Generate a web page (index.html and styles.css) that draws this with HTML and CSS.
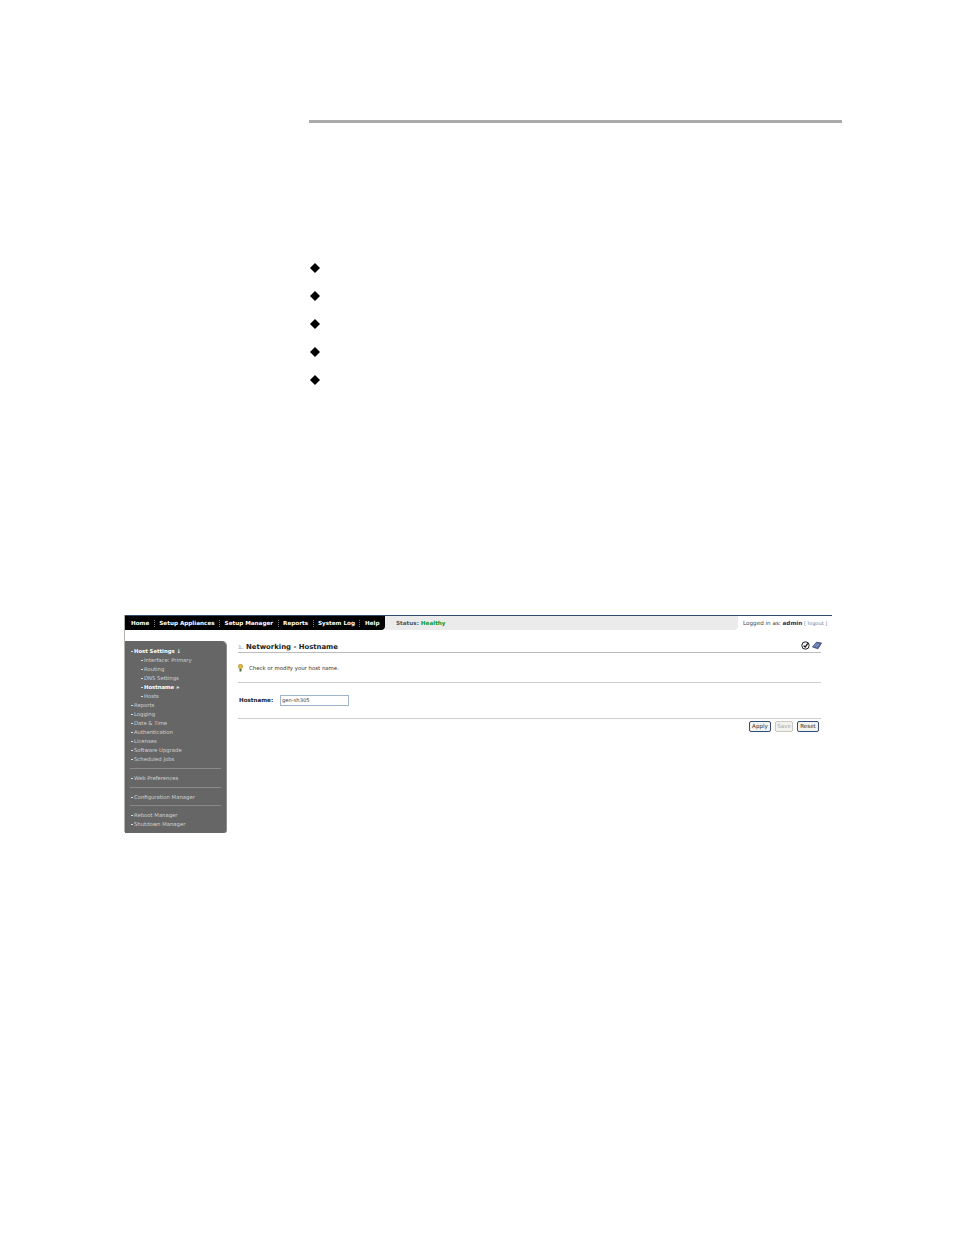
FILE: index.html
```html
<!DOCTYPE html>
<html lang="en">
<head>
  <meta charset="UTF-8">
  <title>Hostname</title>
  <link rel="stylesheet" href="styles.css">
</head>
<body>
  <div class="page-rule"></div>
  <ul class="bullets">
    <li><svg viewBox="0 0 10 10"><polygon points="5,0 10,5 5,10 0,5"/></svg></li>
    <li><svg viewBox="0 0 10 10"><polygon points="5,0 10,5 5,10 0,5"/></svg></li>
    <li><svg viewBox="0 0 10 10"><polygon points="5,0 10,5 5,10 0,5"/></svg></li>
    <li><svg viewBox="0 0 10 10"><polygon points="5,0 10,5 5,10 0,5"/></svg></li>
    <li><svg viewBox="0 0 10 10"><polygon points="5,0 10,5 5,10 0,5"/></svg></li>
  </ul>

  <div class="shot">
    <div class="topbar">
      <nav class="menu">
        <a>Home</a><i></i>
        <a>Setup Appliances</a><i></i>
        <a class="current">Setup Manager</a><i></i>
        <a>Reports</a><i></i>
        <a>System Log</a><i></i>
        <a>Help</a>
      </nav>
      <div class="status">Status: <b>Healthy</b></div>
      <div class="login">Logged in as: <b>admin</b> <span>[ logout ]</span></div>
    </div>

    <div class="columns">
      <aside class="sidebar">
        <ul class="side-group">
          <li class="head">Host Settings &#8595;</li>
          <li class="sub">Interface: Primary</li>
          <li class="sub">Routing</li>
          <li class="sub">DNS Settings</li>
          <li class="sub active">Hostname &raquo;</li>
          <li class="sub">Hosts</li>
          <li>Reports</li>
          <li>Logging</li>
          <li>Date &amp; Time</li>
          <li>Authentication</li>
          <li>Licenses</li>
          <li>Software Upgrade</li>
          <li>Scheduled Jobs</li>
        </ul>
        <ul class="side-group">
          <li>Web Preferences</li>
        </ul>
        <ul class="side-group tight">
          <li>Configuration Manager</li>
        </ul>
        <ul class="side-group">
          <li>Reboot Manager</li>
          <li>Shutdown Manager</li>
        </ul>
      </aside>

      <main class="content">
        <div class="title-row">
          <h1><span class="crumb">1.</span> Networking - Hostname</h1>
          <div class="title-icons">
            <svg width="9" height="9" viewBox="0 0 9 9"><circle cx="4.5" cy="4.5" r="3.7" fill="#f4f4f4" stroke="#222" stroke-width="1"/><path d="M2.6 4.6 4.2 6 6.8 2.4" fill="none" stroke="#111" stroke-width="1.2"/></svg>
            <svg width="10" height="9" viewBox="0 0 10 9"><path d="M0.5 6 4.5 1.2 9.5 2 6 7.8 Z" fill="#5a6ea8" stroke="#2c3563" stroke-width="0.7"/><path d="M2 5.6 5 2.4 M4 6 7 3" stroke="#c4cde8" stroke-width="0.6"/></svg>
          </div>
        </div>
        <div class="hint">
          <svg width="5" height="8" viewBox="0 0 5 8"><circle cx="2.5" cy="2.5" r="2.2" fill="#e2b93a" stroke="#8a7420" stroke-width="0.5"/><rect x="1.5" y="5" width="2" height="2.5" fill="#5c6a3a"/></svg>
          <span>Check or modify your host name.</span>
        </div>
        <div class="field">
          <label>Hostname:</label>
          <input class="text-input" type="text" value="gen-sh305">
        </div>
        <div class="actions">
          <button class="btn">Apply</button>
          <button class="btn disabled">Save</button>
          <button class="btn">Reset</button>
        </div>
      </main>
    </div>
  </div>
</body>
</html>
```

FILE: styles.css
```css
* {
  margin: 0;
  padding: 0;
  box-sizing: border-box;
}
body {
  background: #fff;
  font-family: "DejaVu Sans", Verdana, sans-serif;
  min-height: 1235px;
}
ul {
  list-style: none;
}

/* document page */
.page-rule {
  margin: 120px 112px 0 309px;
  height: 3px;
  background: #aaa;
}
.bullets {
  margin: 130.5px 0 0 310px;
}
.bullets li {
  height: 28px;
  display: flex;
  align-items: center;
}
.bullets svg {
  width: 10px;
  height: 10px;
}

/* screenshot inside the page */
.shot {
  margin: 221.5px 122px 0 124px;
  height: 217px;
  border-left: 1px solid #b5b1a6;
  display: flex;
  flex-direction: column;
}
.topbar {
  display: flex;
  height: 15px;
  border-top: 1px solid #2f4d6e;
  font-size: 5.65px;
  line-height: 14px;
}
.menu {
  display: flex;
  align-items: center;
  width: 260px;
  padding-left: 6px;
  background: #000;
  color: #fff;
  font-weight: bold;
  border-radius: 0 0 4px 0;
}
.menu i {
  height: 7px;
  border-left: 1px dotted #777;
  margin: 0 4.5px;
}
.status {
  width: 353px;
  padding-left: 11px;
  background: #ebebeb;
  color: #555;
  font-weight: bold;
  border-radius: 0 0 4px 0;
}
.status b {
  color: #0a9a2a;
}
.login {
  flex: 1;
  padding-left: 5px;
  color: #444;
  white-space: nowrap;
}
.login b {
  color: #12306e;
}
.login span {
  color: #5b7fb0;
  font-size: 5.1px;
}

.columns {
  display: flex;
  flex: 1;
  margin-top: 11px;
}

/* left menu */
.sidebar {
  width: 102px;
  padding: 5.5px 5px 0 5px;
  background: #666;
  border-right: 1px solid #8b8b8b;
  border-radius: 0 5px 3px 0;
  color: #d2d2d2;
  font-size: 5.3px;
  line-height: 9px;
}
.side-group {
  padding-bottom: 4px;
  margin-bottom: 5px;
  border-bottom: 1px solid #8a8a8a;
}
.side-group.tight {
  padding-bottom: 3px;
}
.side-group:last-child {
  border-bottom: none;
  margin-bottom: 0;
}
.side-group li {
  padding-left: 4px;
  position: relative;
  white-space: nowrap;
}
.side-group li::before {
  content: "";
  position: absolute;
  left: 1px;
  top: 4px;
  width: 1.5px;
  height: 1px;
  background: #ddd;
}
.side-group .head {
  color: #fff;
  font-weight: bold;
}
.side-group .sub {
  padding-left: 14px;
}
.side-group .sub::before {
  left: 11px;
}
.side-group .active {
  color: #fff;
  font-weight: bold;
}

/* main panel */
.content {
  width: 583px;
  margin-left: 11px;
  font-size: 5.4px;
  color: #333;
}
.title-row {
  display: flex;
  justify-content: space-between;
  height: 12px;
  border-bottom: 1px solid #bbb;
}
.title-row h1 {
  font-size: 6.9px;
  line-height: 13px;
  font-weight: bold;
  color: #222;
}
.crumb {
  color: #a8b4c4;
  font-size: 5.2px;
}
.title-icons {
  display: flex;
  gap: 2px;
  margin-right: -1px;
}
.hint {
  display: flex;
  align-items: center;
  gap: 6px;
  height: 30px;
  border-bottom: 1px solid #ccc;
}
.field {
  display: flex;
  align-items: center;
  height: 36px;
  padding-bottom: 1px;
  border-bottom: 1px solid #ccc;
}
.field label {
  width: 42px;
  padding-left: 1px;
  font-size: 5.6px;
  font-weight: bold;
  color: #222;
}
.text-input {
  width: 69px;
  height: 11px;
  padding-left: 1px;
  border: 1px solid #9db4cc;
  font-family: inherit;
  font-size: 5.2px;
  color: #444;
}
.actions {
  display: flex;
  justify-content: flex-end;
  gap: 4px;
  padding: 1.5px 2px 0 0;
}
.btn {
  width: 22px;
  height: 11px;
  border: 1px solid #2f4d78;
  border-radius: 2px;
  background: #f2f2ee;
  font-family: inherit;
  font-size: 5.6px;
  color: #333;
}
.btn.disabled {
  width: 18px;
  border-color: #c8c8bc;
  color: #aaa;
}
```
